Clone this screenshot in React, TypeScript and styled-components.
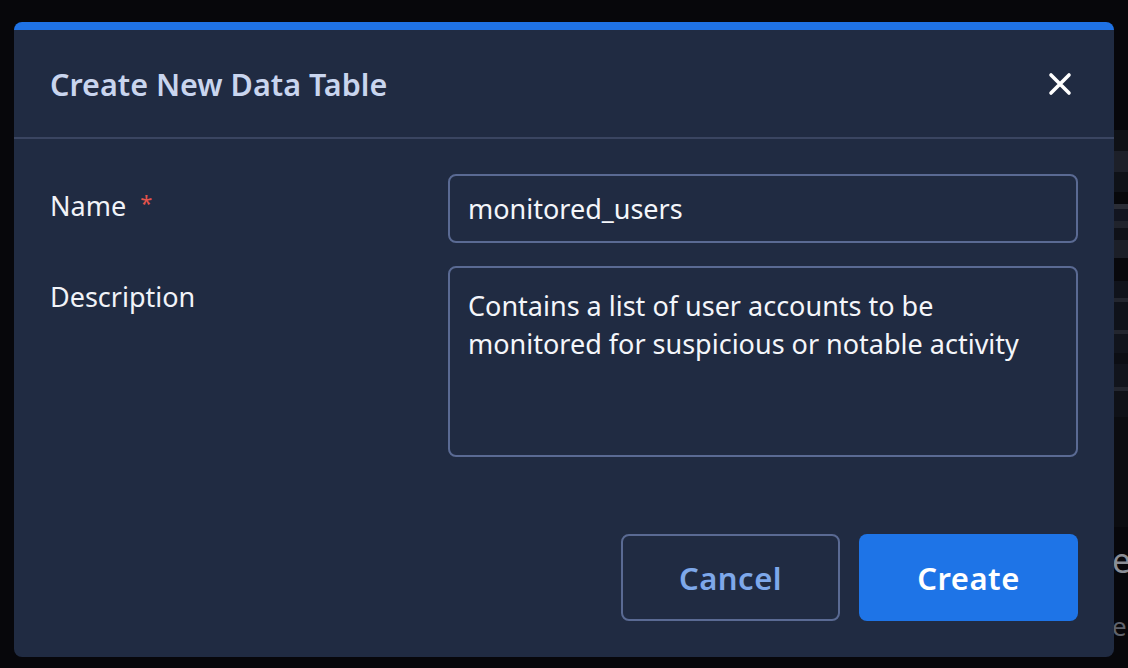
import React, { useState } from 'react';
import styled, { createGlobalStyle } from 'styled-components';

const GlobalStyle = createGlobalStyle`
    html, body {
        margin: 0;
        padding: 0;
        background: #07070b;
    }
    * {
        box-sizing: border-box;
    }
`;

const Page = styled.div`
    position: relative;
    width: 1128px;
    height: 668px;
    overflow: hidden;
    background: #07070b;
    font-family: 'Noto Sans', 'Open Sans', sans-serif;
`;

// what is left of the page behind the dialog, seen at its right edge
const Behind = styled.div`
    display: flex;
    flex-direction: column;
    margin-left: 1100px;
    padding-top: 130px;
`;

const BehindRow = styled.div<{ $h: number; $bg: string }>`
    height: ${p => p.$h}px;
    background: ${p => p.$bg};
`;

const BehindText = styled.div<{ $size: number; $color: string; $gap: number }>`
    margin-top: ${p => p.$gap}px;
    padding-left: 12px;
    font-size: ${p => p.$size}px;
    line-height: 1;
    color: ${p => p.$color};
`;

const Overlay = styled.div`
    position: absolute;
    inset: 0;
    padding: 22px 14px 11px;
    display: flex;
    align-items: flex-start;
`;

const Dialog = styled.div`
    width: 1100px;
    height: 635px;
    display: flex;
    flex-direction: column;
    background: #202b42;
    border-top: 8px solid #1f72e5;
    border-radius: 8px;
    overflow: hidden;
`;

const Header = styled.div`
    height: 109px;
    flex-shrink: 0;
    display: flex;
    align-items: center;
    justify-content: space-between;
    padding: 0 40px 0 36px;
    border-bottom: 2px solid #3a4561;
`;

const Title = styled.h2`
    margin: 0;
    font-size: 30.5px;
    font-weight: 600;
    color: #c9d5ee;
`;

const CloseButton = styled.button`
    width: 28px;
    height: 28px;
    padding: 0;
    border: none;
    background: none;
    display: flex;
    align-items: center;
    justify-content: center;
    cursor: pointer;
`;

const Body = styled.div`
    flex: 1;
    display: flex;
    flex-direction: column;
    gap: 23px;
    padding: 35px 36px 0;
`;

const Row = styled.div`
    display: grid;
    grid-template-columns: 398px 1fr;
    align-items: start;
`;

const Label = styled.label<{ $top: number }>`
    padding-top: ${p => p.$top}px;
    font-size: 27px;
    line-height: 38px;
    color: #f1f3f8;
`;

const Required = styled.span`
    margin-left: 14px;
    color: #e5534b;
    font-size: 22px;
    vertical-align: 5px;
`;

const fieldBase = `
    width: 100%;
    border: 2px solid #5a6a93;
    border-radius: 8px;
    background: #202b42;
    color: #f4f6fa;
    font-family: 'Noto Sans', 'Open Sans', sans-serif;
    font-size: 27px;
    outline: none;
`;

const Input = styled.input`
    ${fieldBase}
    height: 69px;
    padding: 0 18px;
`;

const TextArea = styled.textarea`
    ${fieldBase}
    height: 191px;
    padding: 19px 18px 0;
    line-height: 38px;
    resize: none;
`;

const Footer = styled.div`
    display: flex;
    justify-content: flex-end;
    gap: 19px;
    padding: 0 36px 36px;
`;

const Button = styled.button<{ $primary?: boolean }>`
    width: 219px;
    height: 87px;
    border-radius: 8px;
    font-family: 'Noto Sans', 'Open Sans', sans-serif;
    font-size: 31px;
    font-weight: 600;
    letter-spacing: 0.5px;
    cursor: pointer;
    border: ${p => (p.$primary ? 'none' : '2px solid #5a6a93')};
    background: ${p => (p.$primary ? '#1e74e7' : 'transparent')};
    color: ${p => (p.$primary ? '#ffffff' : '#7ea8ea')};
`;

const behindRows: [number, string][] = [
    [21, '#0f1116'],
    [21, '#1d2029'],
    [20, '#0f1218'],
    [12, '#07080b'],
    [5, '#2a2d36'],
    [12, '#121520'],
    [7, '#20232c'],
    [12, '#0f1118'],
    [18, '#1c1f28'],
    [23, '#08080c'],
    [17, '#10131b'],
    [4, '#23262f'],
    [28, '#0f121a'],
    [4, '#23262f'],
    [19, '#11141c'],
    [11, '#0c0e14'],
    [23, '#11141c'],
    [4, '#23262f'],
    [26, '#0f1117'],
    [110, '#0b0c10'],
];

const App: React.FC = () => {
    const [name, setName] = useState('monitored_users');
    const [description, setDescription] = useState(
        'Contains a list of user accounts to be monitored for suspicious or notable activity'
    );

    return (
        <Page>
            <GlobalStyle />

            <Behind>
                {behindRows.map(([h, bg], i) => (
                    <BehindRow key={i} $h={h} $bg={bg} />
                ))}
                <BehindText $size={34} $color="#8b8e96" $gap={16}>e</BehindText>
                <BehindText $size={26} $color="#5f626b" $gap={36}>e</BehindText>
            </Behind>

            <Overlay>
                <Dialog>
                    <Header>
                        <Title>Create New Data Table</Title>
                        <CloseButton aria-label="Close">
                            <svg width="24" height="24" viewBox="0 0 24 24">
                                <path
                                    d="M3 3 L21 21 M21 3 L3 21"
                                    stroke="#ffffff"
                                    strokeWidth="3.6"
                                    strokeLinecap="round"
                                    fill="none"
                                />
                            </svg>
                        </CloseButton>
                    </Header>

                    <Body>
                        <Row>
                            <Label $top={9}>
                                Name
                                <Required>*</Required>
                            </Label>
                            <Input value={name} onChange={e => setName(e.target.value)} />
                        </Row>

                        <Row>
                            <Label $top={12}>Description</Label>
                            <TextArea
                                value={description}
                                onChange={e => setDescription(e.target.value)}
                            />
                        </Row>
                    </Body>

                    <Footer>
                        <Button>Cancel</Button>
                        <Button $primary>Create</Button>
                    </Footer>
                </Dialog>
            </Overlay>
        </Page>
    );
};

export default App;
